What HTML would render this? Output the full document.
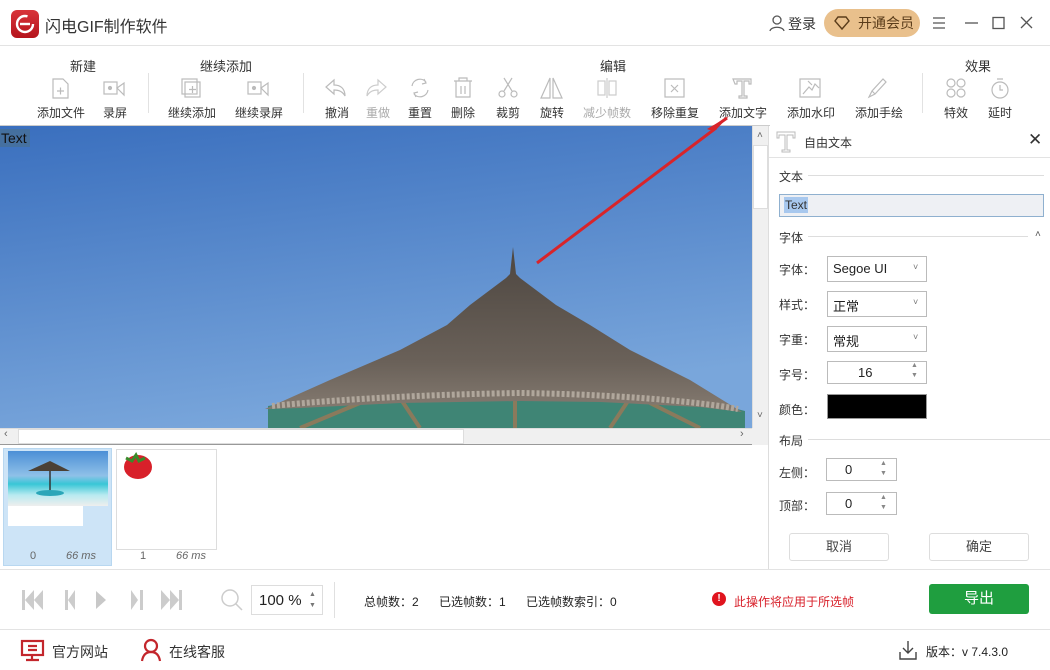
<!DOCTYPE html>
<html><head><meta charset="utf-8"><style>
*{box-sizing:border-box;margin:0;padding:0}
body{width:1050px;height:670px;overflow:hidden;background:#fff;font-family:"Liberation Sans","Noto Sans CJK SC",sans-serif;font-size:12px;color:#333;position:relative}
.a{position:absolute}
.tb{font-size:12px;color:#333;text-align:center}
.g{color:#aaa}
.ic{stroke:#bbb;fill:none;stroke-width:1.2}
.lbl{font-size:12px;color:#333}
.sel{position:absolute;border:1px solid #bbb;background:#fff;height:26px;font-size:13px;padding:4px 5px;color:#222}
.btn{position:absolute;border:1px solid #ddd;border-radius:3px;background:#fff;text-align:center;font-size:13px;color:#444;line-height:26px}
</style></head><body>
<div class="a" style="left:0;top:0;width:1050px;height:46px;border-bottom:1px solid #e3e3e3"></div>
<div class="a" style="left:11px;top:10px;width:28px;height:28px;border-radius:6px;background:linear-gradient(#d8343a,#b5141c)">
<svg width="28" height="28"><circle cx="14" cy="14" r="8" stroke="#fff" stroke-width="2.4" fill="none" stroke-dasharray="40 10"/><path d="M9 14h10" stroke="#fff" stroke-width="2.4"/></svg></div>
<div class="a" style="left:45px;top:13px;font-size:16px;color:#333">闪电GIF制作软件</div>
<svg class="a" style="left:768px;top:14px" width="18" height="18"><circle cx="9" cy="6" r="4" stroke="#555" fill="none" stroke-width="1.3"/><path d="M2 17c1-5 13-5 14 0" stroke="#555" fill="none" stroke-width="1.3"/></svg>
<div class="a" style="left:788px;top:14px;font-size:14px;color:#333">登录</div>
<div class="a" style="left:824px;top:9px;width:96px;height:28px;border-radius:14px;background:#e9c08c;color:#5a3c1a;font-size:14px;line-height:28px;padding-left:34px">开通会员</div>
<svg class="a" style="left:833px;top:15px" width="18" height="16"><path d="M5 2h8l3 4-7 8-7-8z" stroke="#5a3c1a" fill="none" stroke-width="1.4"/></svg>
<svg class="a" style="left:932px;top:15px" width="110" height="16"><path d="M1 3h12M1 8h12M1 13h12" stroke="#555" stroke-width="1.3"/><path d="M33 8h13" stroke="#555" stroke-width="1.3"/><rect x="61" y="2.5" width="11" height="11" stroke="#555" fill="none" stroke-width="1.3"/><path d="M89 2l11 11M100 2l-11 11" stroke="#555" stroke-width="1.3"/></svg>
<div class="a tb" style="left:60px;top:56px;width:46px;font-size:13px">新建</div>
<div class="a tb" style="left:186px;top:56px;width:80px;font-size:13px">继续添加</div>
<div class="a tb" style="left:590px;top:56px;width:46px;font-size:13px">编辑</div>
<div class="a tb" style="left:955px;top:56px;width:46px;font-size:13px">效果</div>
<div class="a" style="left:148px;top:73px;width:1px;height:40px;background:#e2e2e2"></div>
<div class="a" style="left:303px;top:73px;width:1px;height:40px;background:#e2e2e2"></div>
<div class="a" style="left:922px;top:73px;width:1px;height:40px;background:#e2e2e2"></div>
<svg class="a" style="left:0;top:76px" width="1050" height="26">
<g class="ic">
<path d="M53 3h10l5 5v14H53z M57 15h7M60.5 11.5v7"/>
<rect x="104" y="6" width="13" height="12"/><path d="M117 12l7-5v12z"/><circle cx="110" cy="12" r="1.5" fill="#bbb"/>
<rect x="182" y="3" width="15" height="15"/><rect x="185" y="6" width="15" height="15"/><path d="M189 13.5h7M192.5 10v7"/>
<rect x="248" y="6" width="13" height="12"/><path d="M261 12l7-5v12z"/><circle cx="254" cy="12" r="1.5" fill="#bbb"/>
<path d="M334 4l-8 7 8 7v-4c5 0 9 2 11 6 0-7-4-11-11-11z"/>
<path d="M378 4l8 7-8 7v-4c-5 0-9 2-11 6 0-7 4-11 11-11z" stroke="#ccc"/>
<path d="M412 10a8 8 0 0 1 14-4M428 14a8 8 0 0 1-14 4M424 3l2 4-4 1M416 21l-2-4 4-1"/>
<path d="M454 5h18M459 5V2h8v3M456 5v16h14V5M461 10v8M465 10v8"/>
<circle cx="502" cy="18" r="3"/><circle cx="514" cy="18" r="3"/><path d="M504 15l8-13M512 15l-8-13"/>
<path d="M550 2v20h-9zM553 2v20h9z"/>
<rect x="598" y="5" width="7" height="14" stroke="#ccc"/><rect x="609" y="5" width="7" height="14" stroke="#ccc"/><path d="M607 2v20" stroke="#ccc"/>
<rect x="665" y="3" width="19" height="18"/><path d="M671 9l7 7M678 9l-7 7"/>
<path d="M733 3h18v5h-2V5h-5v15h3v2h-8v-2h3V5h-5v3h-2z"/>
<rect x="800" y="3" width="20" height="18"/><path d="M803 18l6-7 3 3 3-6 4 4M808 5l4 4"/>
<path d="M869 21l3-6 11-12 3 3-11 12zM872 15l3 3"/>
<circle cx="951" cy="7" r="4"/><circle cx="961" cy="7" r="4"/><circle cx="951" cy="17" r="4"/><circle cx="961" cy="17" r="4"/>
<circle cx="1000" cy="14" r="8"/><path d="M997 3h6M1000 9v5h3"/>
</g></svg>
<div class="a tb" style="left:30px;top:104px;width:62px">添加文件</div>
<div class="a tb" style="left:98px;top:104px;width:34px">录屏</div>
<div class="a tb" style="left:161px;top:104px;width:62px">继续添加</div>
<div class="a tb" style="left:228px;top:104px;width:62px">继续录屏</div>
<div class="a tb" style="left:320px;top:104px;width:34px">撤消</div>
<div class="a tb g" style="left:361px;top:104px;width:34px">重做</div>
<div class="a tb" style="left:403px;top:104px;width:34px">重置</div>
<div class="a tb" style="left:446px;top:104px;width:34px">删除</div>
<div class="a tb" style="left:491px;top:104px;width:34px">裁剪</div>
<div class="a tb" style="left:535px;top:104px;width:34px">旋转</div>
<div class="a tb g" style="left:577px;top:104px;width:60px">减少帧数</div>
<div class="a tb" style="left:644px;top:104px;width:62px">移除重复</div>
<div class="a tb" style="left:712px;top:104px;width:62px">添加文字</div>
<div class="a tb" style="left:780px;top:104px;width:62px">添加水印</div>
<div class="a tb" style="left:848px;top:104px;width:62px">添加手绘</div>
<div class="a tb" style="left:939px;top:104px;width:34px">特效</div>
<div class="a tb" style="left:983px;top:104px;width:34px">延时</div>
<div class="a" style="left:0;top:125px;width:770px;height:1px;background:#ccc"></div>
<svg class="a" style="left:0;top:126px" width="752" height="302">
<defs><linearGradient id="sk" x1="0" y1="0" x2="0.3" y2="1"><stop offset="0" stop-color="#3a6fbe"/><stop offset="1" stop-color="#79a6db"/></linearGradient>
<linearGradient id="rf" x1="0" y1="0" x2="0" y2="1"><stop offset="0" stop-color="#4d4640"/><stop offset="0.7" stop-color="#6a6159"/><stop offset="1" stop-color="#857b71"/></linearGradient></defs>
<rect width="752" height="302" fill="url(#sk)"/>
<path d="M268 302V280L400 258H640L745 285V302z" fill="#3f8575"/>
<path d="M300 302l60-25M420 302l-20-30M515 302v-35M610 302l20-30M700 302l-50-25" stroke="#8a7a5c" stroke-width="4"/>
<path d="M510 148l3-27 3 27 4 4 L556 179 590 199 630 224 690 254 742 286 700 281 600 276 520 275 400 277 300 282 265 283 330 254 400 224 447 199 470 179 506 152z" fill="url(#rf)"/>
<path d="M272 280 C350 272 450 268 520 267 C600 268 690 274 738 283" stroke="#b0a79c" stroke-width="6" fill="none" stroke-dasharray="3 2"/>
<rect x="0" y="3" width="30" height="18" fill="#4b6f8a" opacity=".6"/>
<text x="1" y="17" font-family="Liberation Sans" font-size="14" fill="#111">Text</text>
<path d="M537 137L716 2" stroke="#d8242a" stroke-width="3"/>
</svg>
<svg class="a" style="left:700px;top:110px" width="40" height="20"><path d="M29 6L7 19l7 3z" fill="#d8242a"/><path d="M27 8L10 20" stroke="#d8242a" stroke-width="3"/></svg>
<div class="a" style="left:752px;top:126px;width:17px;height:302px;background:#f0f0f0;border-left:1px solid #ddd"></div>
<div class="a" style="left:753px;top:145px;width:15px;height:64px;background:#fff;border:1px solid #ddd"></div>
<div class="a" style="left:752px;top:428px;width:17px;height:17px;background:#f0f0f0"></div>
<div class="a" style="left:0;top:428px;width:752px;height:17px;background:#f0f0f0;border-top:1px solid #ddd;border-bottom:1px solid #999"></div>
<div class="a" style="left:18px;top:429px;width:446px;height:15px;background:#fff;border:1px solid #ddd"></div>
<div class="a" style="left:4px;top:428px;font-size:11px;color:#666">‹</div>
<div class="a" style="left:740px;top:428px;font-size:11px;color:#666">›</div>
<div class="a" style="left:757px;top:130px;font-size:10px;color:#666">˄</div>
<div class="a" style="left:757px;top:410px;font-size:10px;color:#666">˅</div>
<div class="a" style="left:3px;top:448px;width:109px;height:118px;background:#cde4f7;border:1px solid #b8d7f0"></div>
<div class="a" style="left:8px;top:451px;width:100px;height:55px;background:linear-gradient(#4c8fd6 0%,#8fc1e8 45%,#38c6d6 60%,#b8eaf0 80%,#eee 100%)"></div>
<svg class="a" style="left:8px;top:451px" width="100" height="55"><path d="M20 20L42 10 62 20z" fill="#4b4035"/><path d="M42 20v20" stroke="#333" stroke-width="1.5"/><ellipse cx="42" cy="42" rx="14" ry="3" fill="#2aa6b8"/></svg>
<div class="a" style="left:8px;top:506px;width:75px;height:20px;background:#fff"></div>
<div class="a" style="left:30px;top:550px;font-size:11px;color:#666">0</div>
<div class="a" style="left:66px;top:550px;font-size:11px;color:#666;font-style:italic">66 ms</div>
<div class="a" style="left:116px;top:449px;width:101px;height:101px;border:1px solid #ddd;background:#fff"></div>
<svg class="a" style="left:120px;top:452px" width="40" height="30"><ellipse cx="18" cy="15" rx="14" ry="12" fill="#d8202a"/><path d="M6 6l6 3 4-6 3 6 6-3" stroke="#3a8a2a" stroke-width="3" fill="none"/></svg>
<div class="a" style="left:140px;top:550px;font-size:11px;color:#666">1</div>
<div class="a" style="left:176px;top:550px;font-size:11px;color:#666;font-style:italic">66 ms</div>
<div class="a" style="left:768px;top:126px;width:1px;height:444px;background:#ddd"></div>
<svg class="a" style="left:776px;top:131px" width="20" height="22"><path d="M1 1h18v6h-2V4h-6v15h3v2H6v-2h3V4H3v3H1z" stroke="#bbb" fill="none"/></svg>
<div class="a" style="left:804px;top:134px;font-size:12px">自由文本</div>
<div class="a" style="left:1028px;top:130px;font-size:17px;color:#333">✕</div>
<div class="a" style="left:769px;top:157px;width:281px;height:1px;background:#e3e3e3"></div>
<div class="a lbl" style="left:779px;top:168px">文本</div><div class="a" style="left:808px;top:175px;width:236px;height:1px;background:#ddd"></div>
<div class="a" style="left:779px;top:194px;width:265px;height:23px;background:#eef0f4;border:1px solid #8fb0cf"></div>
<div class="a" style="left:784px;top:197px;background:#a8c8ee;font-size:12px;padding:0 1px;line-height:16px">Text</div>
<div class="a lbl" style="left:779px;top:229px">字体</div><div class="a" style="left:808px;top:236px;width:220px;height:1px;background:#ddd"></div>
<div class="a" style="left:1035px;top:229px;font-size:10px;color:#555">˄</div>
<div class="a lbl" style="left:779px;top:261px">字体：</div><div class="sel" style="left:827px;top:256px;width:100px">Segoe UI</div>
<div class="a lbl" style="left:779px;top:296px">样式：</div><div class="sel" style="left:827px;top:291px;width:100px">正常</div>
<div class="a lbl" style="left:779px;top:331px">字重：</div><div class="sel" style="left:827px;top:326px;width:100px">常规</div>
<div class="a" style="left:913px;top:262px;font-size:9px;color:#777">˅</div>
<div class="a" style="left:913px;top:297px;font-size:9px;color:#777">˅</div>
<div class="a" style="left:913px;top:332px;font-size:9px;color:#777">˅</div>
<div class="a lbl" style="left:779px;top:366px">字号：</div><div class="sel" style="left:827px;top:361px;width:100px;height:23px;padding:3px 0 0 30px">16</div>
<div class="a" style="left:911px;top:361px;font-size:7px;color:#888;line-height:10px">▲<br>▼</div>
<div class="a lbl" style="left:779px;top:401px">颜色：</div><div class="a" style="left:827px;top:394px;width:100px;height:25px;background:#000;border:1px solid #999"></div>
<div class="a lbl" style="left:779px;top:432px">布局</div><div class="a" style="left:808px;top:439px;width:242px;height:1px;background:#ddd"></div>
<div class="a lbl" style="left:779px;top:464px">左侧：</div><div class="sel" style="left:826px;top:458px;width:71px;height:23px;padding:3px 0 0 18px">0</div>
<div class="a lbl" style="left:779px;top:497px">顶部：</div><div class="sel" style="left:826px;top:492px;width:71px;height:23px;padding:3px 0 0 18px">0</div>
<div class="a" style="left:880px;top:459px;font-size:7px;color:#888;line-height:10px">▲<br>▼</div>
<div class="a" style="left:880px;top:493px;font-size:7px;color:#888;line-height:10px">▲<br>▼</div>
<div class="btn" style="left:789px;top:533px;width:100px;height:28px">取消</div>
<div class="btn" style="left:929px;top:533px;width:100px;height:28px">确定</div>
<div class="a" style="left:0;top:569px;width:1050px;height:1px;background:#e3e3e3"></div>
<svg class="a" style="left:20px;top:588px" width="165" height="24"><g fill="#ccc">
<path d="M2 2h3v20H2zM14 2v20L5 12zM23 2v20l-9-10z"/><path d="M45 2h3v20h-3zM48 12l7-10v20z"/><path d="M76 3l10 9-10 9z" fill="#c8c8c8"/><path d="M111 2l7 10-7 10zM120 2h3v20h-3z"/><path d="M141 2l9 10-9 10zM150 2l9 10-9 10zM159 2h3v20h-3z"/></g>
</svg>
<svg class="a" style="left:220px;top:588px" width="24" height="24"><circle cx="10" cy="10" r="8" stroke="#ccc" fill="none" stroke-width="1.5"/><path d="M16 16l6 6" stroke="#ccc" stroke-width="1.5"/></svg>
<div class="a" style="left:251px;top:585px;width:72px;height:30px;border:1px solid #ddd;font-size:15px;padding:6px 0 0 7px;color:#222">100 %</div>
<div class="a" style="left:309px;top:589px;font-size:7px;color:#777;line-height:11px">▲<br>▼</div>
<div class="a" style="left:334px;top:582px;width:1px;height:36px;background:#e0e0e0"></div>
<div class="a" style="left:364px;top:593px;font-size:12px;color:#222">总帧数：2</div>
<div class="a" style="left:439px;top:593px;font-size:12px;color:#222">已选帧数：1</div>
<div class="a" style="left:526px;top:593px;font-size:12px;color:#222">已选帧数索引：0</div>
<div class="a" style="left:712px;top:592px;width:14px;height:14px;border-radius:7px;background:#e0141e;color:#fff;font-size:10px;text-align:center;line-height:14px;font-weight:bold">!</div>
<div class="a" style="left:734px;top:593px;font-size:12px;color:#d8202a">此操作将应用于所选帧</div>
<div class="a" style="left:929px;top:584px;width:100px;height:30px;background:#1f9e3f;border-radius:3px;color:#fff;font-size:15px;text-align:center;line-height:30px">导出</div>
<div class="a" style="left:0;top:629px;width:1050px;height:1px;background:#e3e3e3"></div>
<svg class="a" style="left:20px;top:639px" width="26" height="24"><rect x="2" y="2" width="21" height="14" stroke="#c3262c" stroke-width="2.2" fill="none"/><path d="M8 7h9M8 11h9M12 16v4M6 21h13" stroke="#c3262c" stroke-width="2.2"/></svg>
<div class="a" style="left:52px;top:642px;font-size:14px;color:#333">官方网站</div>
<svg class="a" style="left:140px;top:638px" width="22" height="24"><circle cx="11" cy="8" r="6" stroke="#c3262c" stroke-width="2.2" fill="none"/><path d="M2 23c1-6 4-9 9-9s8 3 9 9" stroke="#c3262c" stroke-width="2.2" fill="none"/></svg>
<div class="a" style="left:169px;top:642px;font-size:14px;color:#333">在线客服</div>
<svg class="a" style="left:899px;top:640px" width="18" height="20"><path d="M9 1v12M4 8l5 5 5-5M1 12v7h16v-7" stroke="#444" stroke-width="1.4" fill="none"/></svg>
<div class="a" style="left:926px;top:643px;font-size:12px;color:#222">版本：v 7.4.3.0</div>
</body></html>
